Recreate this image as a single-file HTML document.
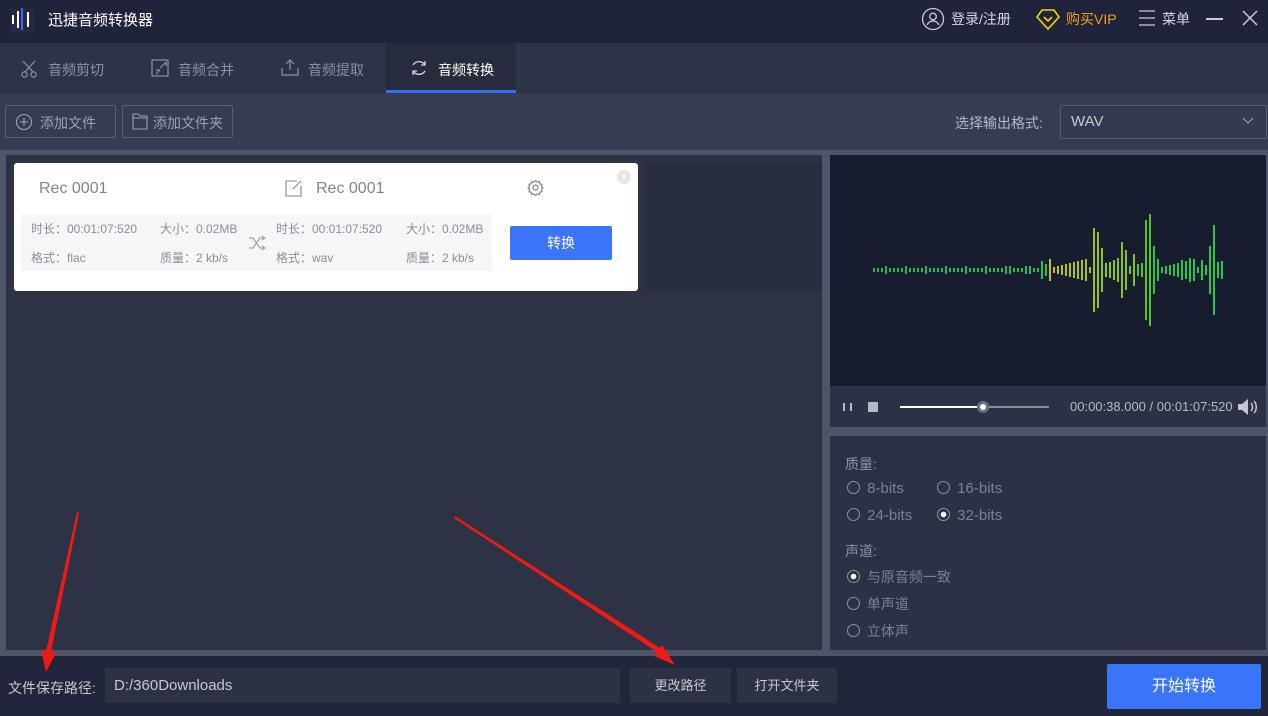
<!DOCTYPE html>
<html><head><meta charset="utf-8"><style>
*{margin:0;padding:0;box-sizing:border-box}
body{width:1268px;height:716px;overflow:hidden;background:#4f5568;font-family:"Liberation Sans","Noto Sans CJK SC",sans-serif;position:relative;color:#c9ccd6}
.a{position:absolute}
.t{font-size:14px;white-space:nowrap}
.r{display:inline-block;width:13px;height:13px;border:1px solid #8c92a4;border-radius:50%;vertical-align:-1px;margin-right:3px}
.on{background:radial-gradient(#fff 2.5px,transparent 3px)}
</style></head><body>
<div class="a" style="left:0;top:0;width:1268px;height:43px;background:#20243a"></div>
<div class="a" style="left:10px;top:9px;width:24px;height:24px;background:#252a44"></div>
<div class="a" style="left:12px;top:15px;width:2px;height:9px;background:#fff"></div>
<div class="a" style="left:17px;top:11px;width:2px;height:17px;background:#fff"></div>
<div class="a" style="left:21px;top:8px;width:2px;height:22px;background:#3d6cf0"></div>
<div class="a" style="left:27px;top:12px;width:2px;height:15px;background:#fff"></div>
<div class="a t" style="left:48px;top:9px;font-size:15px;color:#fff">迅捷音频转换器</div>
<svg class="a" style="left:921px;top:7px" width="24" height="24" viewBox="0 0 24 24" fill="none" stroke="#c9ccd6" stroke-width="1.3"><circle cx="12" cy="12" r="10.5"/><circle cx="12" cy="9.5" r="3.3"/><path d="M6 18c1.5-3 3.5-4 6-4s4.5 1 6 4"/></svg>
<div class="a t" style="left:951px;top:9px;color:#d5d8e0">登录/注册</div>
<svg class="a" style="left:1036px;top:8px" width="24" height="22" viewBox="0 0 24 22" fill="none" stroke="#f2d400" stroke-width="1.6"><path d="M6 2h12l5 7-11 12L1 9z"/><path d="M8 9l4 4 4-4"/></svg>
<div class="a t" style="left:1066px;top:9px;color:#f0a020">购买VIP</div>
<svg class="a" style="left:1138px;top:9px" width="18" height="18" stroke="#c9ccd6" stroke-width="1.3"><path d="M1 2h16M1 9h16M1 16h16"/></svg>
<div class="a t" style="left:1162px;top:9px;color:#d5d8e0">菜单</div>
<div class="a" style="left:1206px;top:18px;width:17px;height:1.5px;background:#c9ccd6"></div>
<svg class="a" style="left:1242px;top:10px" width="16" height="16" stroke="#c9ccd6" stroke-width="1.5"><path d="M1 1l14 14M15 1L1 15"/></svg>
<div class="a" style="left:0;top:43px;width:1268px;height:50px;background:#2e3448"></div>
<div class="a" style="left:386px;top:43px;width:130px;height:50px;background:#262b3d;border-bottom:3px solid #3d6cf0"></div>
<svg class="a" style="left:20px;top:60px" width="18" height="18" fill="none" stroke="#8c92a4" stroke-width="1.2"><path d="M3 1l10 11M15 1L5 12"/><circle cx="4.5" cy="14.5" r="2.6"/><circle cx="13.5" cy="14.5" r="2.6"/></svg>
<div class="a t" style="left:48px;top:60px;color:#8c92a4">音频剪切</div>
<svg class="a" style="left:151px;top:59px" width="18" height="18" fill="none" stroke="#8c92a4" stroke-width="1.2"><rect x="1" y="1" width="16" height="16"/><path d="M9 9l6-6M15 3v4M5 15l4-4M9 11H5"/></svg>
<div class="a t" style="left:178px;top:60px;color:#8c92a4">音频合并</div>
<svg class="a" style="left:281px;top:58px" width="18" height="18" fill="none" stroke="#8c92a4" stroke-width="1.2"><path d="M9 12V2M5 6l4-4 4 4M1 10v7h16v-7"/></svg>
<div class="a t" style="left:308px;top:60px;color:#8c92a4">音频提取</div>
<svg class="a" style="left:410px;top:59px" width="18" height="18" fill="none" stroke="#d5d8e0" stroke-width="1.3"><path d="M15 6A7 7 0 0 0 3 6M3 12a7 7 0 0 0 12 0M15 2v4h-4M3 16v-4h4"/></svg>
<div class="a t" style="left:438px;top:60px;color:#fff">音频转换</div>
<div class="a" style="left:0;top:93px;width:1268px;height:57px;background:#363d53"></div>
<div class="a" style="left:5px;top:105px;width:111px;height:33px;border:1px solid #5a6174;border-radius:2px"></div>
<svg class="a" style="left:15px;top:113px" width="18" height="18" fill="none" stroke="#9ca1b0" stroke-width="1.1"><circle cx="9" cy="9" r="7.5"/><path d="M9 5v8M5 9h8"/></svg>
<div class="a t" style="left:40px;top:113px;color:#9ca1b0">添加文件</div>
<div class="a" style="left:122px;top:105px;width:111px;height:33px;border:1px solid #5a6174;border-radius:2px"></div>
<svg class="a" style="left:132px;top:112px" width="16" height="18" fill="none" stroke="#9ca1b0" stroke-width="1.1"><path d="M1 2h5l2 2h7v13H1zM1 6h14"/></svg>
<div class="a t" style="left:153px;top:113px;color:#9ca1b0">添加文件夹</div>
<div class="a t" style="left:955px;top:113px;color:#b5b9c5">选择输出格式:</div>
<div class="a" style="left:1060px;top:105px;width:207px;height:34px;border:1px solid #545b6f;border-radius:2px;background:#343b50"></div>
<div class="a t" style="left:1071px;top:113px;color:#c5c9d3;font-size:15px">WAV</div>
<svg class="a" style="left:1242px;top:117px" width="12" height="8" fill="none" stroke="#9ca1b0" stroke-width="1.2"><path d="M1 1l5 5 5-5"/></svg>
<div class="a" style="left:6px;top:155px;width:816px;height:495px;background:#2d3244"></div>
<div class="a" style="left:645px;top:163px;width:177px;height:128px;background:#292e3f"></div>
<div class="a" style="left:14px;top:163px;width:624px;height:128px;background:#fff;border-radius:3px"></div>
<div class="a t" style="left:39px;top:180px;color:#80848f;font-size:16px">Rec 0001</div>
<svg class="a" style="left:285px;top:180px" width="17" height="17" fill="none" stroke="#80848f" stroke-width="1.1"><path d="M12 1H1v15h15V6M8 9l8-8"/></svg>
<div class="a t" style="left:316px;top:180px;color:#80848f;font-size:16px">Rec 0001</div>
<svg class="a" style="left:527px;top:179px" width="17" height="17" fill="none" stroke="#80848f" stroke-width="1.2"><circle cx="8.5" cy="8.5" r="2.5"/><path d="M8.5 1.5l1.5 1.6 2.2-.6.6 2.2 2.2.6-.6 2.2 1.6 1.5-1.6 1.5.6 2.2-2.2.6-.6 2.2-2.2-.6-1.5 1.6-1.5-1.6-2.2.6-.6-2.2-2.2-.6.6-2.2-1.6-1.5 1.6-1.5-.6-2.2 2.2-.6.6-2.2 2.2.6z"/></svg>
<div class="a" style="left:617px;top:170px;width:14px;height:14px;border-radius:50%;background:#e6e7ea;color:#fff;font-size:11px;text-align:center;line-height:14px">×</div>
<div class="a" style="left:21px;top:214px;width:471px;height:57px;background:#f5f6f8"></div>
<div class="a t" style="left:31px;top:220px;color:#8a8e98;font-size:12px">时长：00:01:07:520</div>
<div class="a t" style="left:160px;top:220px;color:#8a8e98;font-size:12px">大小：0.02MB</div>
<div class="a t" style="left:31px;top:249px;color:#8a8e98;font-size:12px">格式：flac</div>
<div class="a t" style="left:160px;top:249px;color:#8a8e98;font-size:12px">质量：2 kb/s</div>
<svg class="a" style="left:248px;top:235px" width="18" height="16" fill="none" stroke="#a0a4ad" stroke-width="1.2"><path d="M1 3h4l7 10h5M1 13h4l7-10h5M14 1l3 2-3 2M14 11l3 2-3 2"/></svg>
<div class="a t" style="left:276px;top:220px;color:#8a8e98;font-size:12px">时长：00:01:07:520</div>
<div class="a t" style="left:406px;top:220px;color:#8a8e98;font-size:12px">大小：0.02MB</div>
<div class="a t" style="left:276px;top:249px;color:#8a8e98;font-size:12px">格式：wav</div>
<div class="a t" style="left:406px;top:249px;color:#8a8e98;font-size:12px">质量：2 kb/s</div>
<div class="a t" style="left:510px;top:226px;width:102px;height:34px;background:#3a74f8;color:#fff;text-align:center;line-height:34px;border-radius:2px">转换</div>
<div class="a" style="left:830px;top:155px;width:436px;height:231px;background:#171d2e"></div>
<svg class="a" id="wv" style="left:830px;top:155px" width="436" height="231"></svg>
<div class="a" style="left:830px;top:386px;width:436px;height:41px;background:#2c3245"></div>
<div class="a" style="left:843px;top:403px;width:2px;height:8px;background:#b5b9c5"></div>
<div class="a" style="left:850px;top:403px;width:2px;height:8px;background:#b5b9c5"></div>
<div class="a" style="left:868px;top:402px;width:10px;height:10px;background:#b5b9c5"></div>
<div class="a" style="left:900px;top:406px;width:149px;height:2px;background:#888d9a"></div>
<div class="a" style="left:900px;top:406px;width:83px;height:2px;background:#fff"></div>
<div class="a" style="left:977px;top:401px;width:12px;height:12px;border-radius:50%;background:#6a7080"></div>
<div class="a" style="left:980px;top:404px;width:6px;height:6px;border-radius:50%;background:#fff"></div>
<div class="a t" style="left:1070px;top:399px;color:#b5b9c5;font-size:13px">00:00:38.000 / 00:01:07:520</div>
<svg class="a" style="left:1237px;top:398px" width="22" height="18" fill="#c2c6d0" stroke="#c2c6d0" stroke-width="1.5"><path d="M1 6h4l6-5v16l-6-5H1z" stroke="none"/><path d="M14 5c2 2 2 6 0 8M17 3c3 3 3 9 0 12" fill="none"/></svg>
<div class="a" style="left:830px;top:436px;width:436px;height:214px;background:#2c3245"></div>
<div class="a t" style="left:845px;top:454px;color:#8c92a4">质量:</div>
<div class="a t" style="left:847px;top:480px;color:#7b8194;font-size:15px"><span class="r"></span> 8-bits</div>
<div class="a t" style="left:937px;top:480px;color:#7b8194;font-size:15px"><span class="r"></span> 16-bits</div>
<div class="a t" style="left:847px;top:507px;color:#7b8194;font-size:15px"><span class="r"></span> 24-bits</div>
<div class="a t" style="left:937px;top:507px;color:#7b8194;font-size:15px"><span class="r on"></span> 32-bits</div>
<div class="a t" style="left:845px;top:541px;color:#8c92a4">声道:</div>
<div class="a t" style="left:847px;top:567px;color:#7b8194"><span class="r on"></span> 与原音频一致</div>
<div class="a t" style="left:847px;top:594px;color:#7b8194"><span class="r"></span> 单声道</div>
<div class="a t" style="left:847px;top:621px;color:#7b8194"><span class="r"></span> 立体声</div>
<div class="a" style="left:0;top:656px;width:1268px;height:60px;background:#22263a"></div>
<div class="a t" style="left:8px;top:678px;color:#c5c9d3">文件保存路径:</div>
<div class="a" style="left:105px;top:668px;width:515px;height:35px;background:#2c3144;border-radius:2px"></div>
<div class="a t" style="left:114px;top:677px;color:#c5c9d3;font-size:15px">D:/360Downloads</div>
<div class="a t" style="left:630px;top:668px;width:101px;height:35px;background:#2c3144;color:#c5c9d3;text-align:center;line-height:35px;font-size:13px">更改路径</div>
<div class="a t" style="left:737px;top:668px;width:100px;height:35px;background:#2c3144;color:#c5c9d3;text-align:center;line-height:35px;font-size:13px">打开文件夹</div>
<div class="a t" style="left:1107px;top:664px;width:154px;height:45px;background:#3a74f8;color:#fff;text-align:center;line-height:45px;font-size:16px;border-radius:2px">开始转换</div>
<svg class="a" style="left:0;top:0" width="1268" height="716"><g fill="#f01a14"><polygon points="77,512 79,513 51,652 56,653 46,672 41,650 46,651"/><polygon points="454,518 455,516 660,648 662,645 675,665 654,656 657,652"/></g></svg>
<script>
var s=document.getElementById('wv'),h='',cy=115;
var big={1063:24,1067:18,1079:36,1083:16,1092:42,1096:38,1100:22,1113:10,1117:12,1121:28,1125:20,1134:16,1146:50,1150:56,1154:24,1167:18,1171:34,1175:26,1181:10,1188:12,1200:10,1208:24,1212:45,1215:68,1219:55,1223:40,1046:6,1030:4,1008:4,1027:4};
for(var x=873;x<=1223;x+=4){var hh=2;for(var k in big){if(Math.abs(k-x)<2){hh=big[k];}}
if(hh==2&&(x>1040))hh=3+((x*7)%9);
if(hh==2&&((x*13)%5==0))hh=4;
var t=(x-873)/350;var r=t>0.45&&t<0.75?Math.round(120+(0.75-t)*300):Math.round(40+t*60);var g=180+Math.round(20*t);var c=t>0.5&&t<0.8?'rgb('+Math.min(200,r)+','+g+',40)':'rgb(40,'+g+',80)';
h+='<rect x="'+(x-830)+'" y="'+(cy-hh)+'" width="2" height="'+(hh*2)+'" fill="'+c+'"/>';}
s.innerHTML=h;
</script>
</body></html>
